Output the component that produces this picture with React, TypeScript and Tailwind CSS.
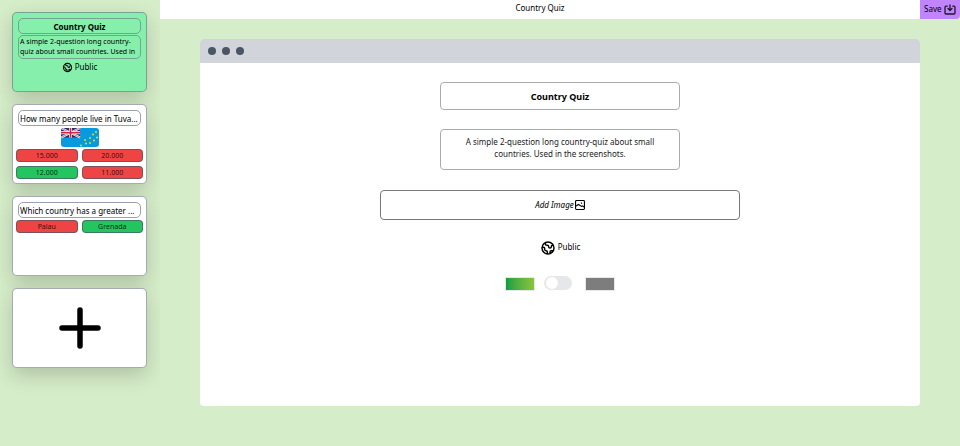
import React from 'react';

const card = 'box-border h-[80px] w-[135px] shrink-0 rounded-[5px] border border-gray-500/60 shadow-[0_7px_20px_rgba(0,0,0,0.19)]';

function Globe({ className }: { className: string }) {
  return (
    <svg className={className} viewBox="0 0 24 24" fill="none" stroke="currentColor" strokeWidth="2.2" strokeLinecap="round" strokeLinejoin="round">
      <path d="M3.055 11H5a2 2 0 012 2v1a2 2 0 002 2 2 2 0 012 2v2.945M8 3.935V5.5A2.5 2.5 0 0010.5 8h.5a2 2 0 012 2 2 2 0 104 0 2 2 0 012-2h1.064M15 20.488V18a2 2 0 012-2h3.064M21 12a9 9 0 11-18 0 9 9 0 0118 0z" />
    </svg>
  );
}

function Flag() {
  const stars = [[20, 17.5], [24, 12], [25, 15.5], [29, 10], [29, 15], [32, 6.5], [33, 12.5], [35, 4], [36, 9.5]];
  return (
    <svg className="mx-auto mt-[2px] block h-[19px] w-[38px] rounded-[3px]" viewBox="0 0 38 19">
      <rect width="38" height="19" fill="#079bdd" />
      <rect width="19" height="9.5" fill="#26306f" />
      <path d="M0 0L19 9.5M19 0L0 9.5" stroke="#fff" strokeWidth="2" />
      <path d="M0 0L19 9.5M19 0L0 9.5" stroke="#c92b48" strokeWidth=".7" />
      <path d="M9.5 0V9.5M0 4.75H19" stroke="#fff" strokeWidth="3" />
      <path d="M9.5 0V9.5M0 4.75H19" stroke="#cc2444" strokeWidth="1.7" />
      {stars.map(([x, y]) => <circle key={`${x}-${y}`} cx={x} cy={y} r=".95" fill="#d9e632" />)}
    </svg>
  );
}

function Answer({ text, correct = false }: { text: string; correct?: boolean }) {
  return (
    <div className={`flex h-[13px] items-center justify-center rounded-[4px] border border-gray-600/70 text-[7px] leading-none text-black/80 ${correct ? 'bg-[#22c55e]' : 'bg-[#ef4444]'}`}>
      {text}
    </div>
  );
}

function Question({ title }: { title: string }) {
  return <div className="mx-[5px] mt-[5px] h-4 overflow-hidden rounded-[5px] border border-gray-400 pl-[1px] text-[8px] leading-[16px] whitespace-nowrap">{title}</div>;
}

export default function App() {
  return (
    <div className="flex h-[446px] w-[960px] overflow-hidden bg-[#d6edc9] font-['Noto_Sans',sans-serif] text-black">
      <aside className="flex w-[160px] shrink-0 flex-col gap-[12px] overflow-hidden pt-3 pl-3">
        <section className={`${card} bg-[#86efac]`}>
          <h2 className="mx-[5px] mt-[5px] h-4 rounded-[5px] border border-gray-500/60 text-center text-[8px] leading-[15px] font-bold">Country Quiz</h2>
          <div className="mx-[5px] mt-[1px] h-6 overflow-hidden rounded-[5px] border border-gray-500/60 pt-px pl-[1px] text-[7px] leading-[10px] whitespace-nowrap">
            A simple 2-question long country-<br />quiz about small countries. Used in
          </div>
          <div className="mt-[2px] flex h-[12px] items-center justify-center gap-[2px] text-[8px]">
            <Globe className="size-[11px]" /><span>Public</span>
          </div>
        </section>
        <section className={`${card} bg-white`}>
          <Question title="How many people live in Tuva..." />
          <Flag />
          <div className="mx-[3px] mt-[2px] grid grid-cols-2 gap-x-1 gap-y-1">
            <Answer text="15.000" /><Answer text="20.000" /><Answer text="12.000" correct /><Answer text="11.000" />
          </div>
        </section>
        <section className={`${card} bg-white`}>
          <Question title="Which country has a greater ..." />
          <div className="mx-[3px] mt-[2px] grid grid-cols-2 gap-1"><Answer text="Palau" /><Answer text="Grenada" correct /></div>
        </section>
        <button aria-label="Add question" className={`${card} flex items-center justify-center bg-white`}>
          <svg className="h-[42px] w-[42px]" viewBox="0 0 42 42" stroke="black" strokeWidth="5.5" strokeLinecap="round"><path d="M21 3V39M3 21H39" /></svg>
        </button>
      </aside>
      <div className="flex min-w-0 flex-1 flex-col">
        <header className="flex h-[19px] shrink-0 items-start">
          <h1 className="h-[18.5px] w-[760px] bg-white text-center text-[8px] leading-[15px]">Country Quiz</h1>
          <button className="flex h-[18.5px] w-10 items-center gap-[3px] rounded-br-[4px] bg-[#c084fc] pl-1 text-[8px]">
            <span>Save</span>
            <svg className="h-[11px] w-3 shrink-0" viewBox="0 0 12 11" fill="none" stroke="#21152d" strokeWidth="1.3" strokeLinecap="round" strokeLinejoin="round"><path d="M3.2 2.2H2Q1 2.2 1 3.2V9Q1 10 2 10H10Q11 10 11 9V3.2Q11 2.2 10 2.2H8.8M6 1V6.3M4 4.5L6 6.5L8 4.5" /></svg>
          </button>
        </header>
        <main className="mt-5 ml-10 flex h-[367px] w-[720px] flex-col overflow-hidden rounded-[4px] bg-white">
          <div className="flex h-[23.5px] shrink-0 items-center gap-[6px] bg-[#d1d5db] pl-2">
            <i className="size-2 rounded-full bg-[#4b5563]" /><i className="size-2 rounded-full bg-[#4b5563]" /><i className="size-2 rounded-full bg-[#4b5563]" />
          </div>
          <div className="flex flex-col items-center">
            <div className="mt-[19.5px] h-[28px] w-[240px] rounded-[4px] border border-[#a8abad] text-center text-[9px] leading-[27px] font-bold">Country Quiz</div>
            <div className="mt-[19px] h-[41px] w-[240px] rounded-[4px] border border-[#a8abad] pt-[6px] text-center text-[8px] leading-[12px] text-[#222]">A simple 2-question long country-quiz about small<br />countries. Used in the screenshots.</div>
            <button className="mt-[20px] flex h-[30px] w-[360px] items-center justify-center gap-[1px] rounded-[4px] border border-[#777a7b] pb-px text-[8px] italic">
              <span>Add Image</span>
              <svg className="size-[10px]" viewBox="0 0 9 9" fill="none" stroke="black" strokeWidth="1"><rect x=".5" y=".5" width="8" height="8" rx=".8" /><path d="M.8 5.5L3 4L6 5.8L6.7 5.3L8.3 6.3M5.3 2.8H6.4" /></svg>
            </button>
            <div className="mt-[19px] flex h-4 items-center justify-center gap-[2px] text-[8px]"><Globe className="mt-[2px] size-[16px]" /><span className="pb-px">Public</span></div>
            <div className="mt-[20px] flex h-4 items-center">
              <div className="mt-px h-[14px] w-[30px] border border-[#e5e7eb] bg-gradient-to-r from-[#009f43] to-[#89c43c]" />
              <div className="mr-[13px] ml-[9px] flex h-[14px] w-[28px] items-center rounded-full bg-[#e5e7eb] px-[2px]"><i className="size-[12px] rounded-full bg-white" /></div>
              <div className="mt-px h-[14px] w-[30px] border border-[#e5e7eb] bg-[#7d7d7d]" />
            </div>
          </div>
        </main>
      </div>
    </div>
  );
}
